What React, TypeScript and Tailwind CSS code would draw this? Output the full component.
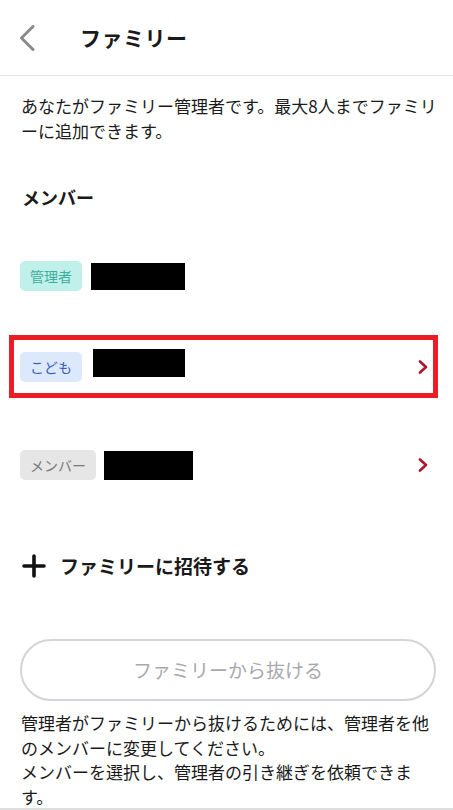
import type { ReactNode } from "react";

type Role = "admin" | "child" | "member";

interface Member {
  id: number;
  role: Role;
  nameWidth: string;
  nameOffset: string;
  selected?: boolean;
  editable?: boolean;
  spacing: string;
}

const badgeStyles: Record<Role, { label: string; className: string }> = {
  admin: { label: "管理者", className: "bg-[#bff0e9] text-[#3fae9f]" },
  child: { label: "こども", className: "bg-[#dce8fb] text-[#3d5fb3]" },
  member: { label: "メンバー", className: "bg-[#e6e6e6] text-[#7a7a7a]" },
};

const members: Member[] = [
  { id: 1, role: "admin", nameWidth: "w-[94px]", nameOffset: "ml-[9px] mt-[1px] h-[27px]", spacing: "mt-[34px]" },
  { id: 2, role: "child", nameWidth: "w-[92px]", nameOffset: "ml-[11px] -mt-[7px] h-[28px]", selected: true, editable: true, spacing: "mt-[28px]" },
  { id: 3, role: "member", nameWidth: "w-[89px]", nameOffset: "ml-[8px] mt-[2px] h-[29px]", editable: true, spacing: "mt-[35px]" },
];

function Chevron({ className }: { className?: string }) {
  return (
    <svg width="12" height="14" viewBox="0 0 12 14" fill="none" className={className}>
      <polyline points="3 1.5 9 7 3 12.5" stroke="currentColor" strokeWidth="2.6" strokeLinecap="round" strokeLinejoin="round" />
    </svg>
  );
}

function Badge({ role }: { role: Role }) {
  const b = badgeStyles[role];
  return (
    <span className={`inline-flex h-[30px] items-center rounded-[5px] px-[10px] text-[14px] leading-none ${b.className}`}>
      {b.label}
    </span>
  );
}

function MemberRow({ m }: { m: Member }) {
  return (
    <div
      className={`${m.spacing} ml-[9px] mr-[15px] flex h-[63px] items-center border-[5px] pl-[6px] pr-[4px] ${
        m.selected ? "border-[#ec1c24]" : "border-transparent"
      }`}
    >
      <Badge role={m.role} />
      <span className={`${m.nameWidth} ${m.nameOffset} bg-black`} />
      <div className="flex-1" />
      {m.editable && <Chevron className="text-[#b0162a]" />}
    </div>
  );
}

// lines are broken by hand so the wrap stays put
function Paragraph({ lines, className = "" }: { lines: ReactNode[]; className?: string }) {
  return (
    <p className={`whitespace-nowrap pl-[21px] text-[17px] text-[#1a1a1a] ${className}`}>
      {lines.map((l, i) => (
        <span key={i} className="block">
          {l}
        </span>
      ))}
    </p>
  );
}

export default function App() {
  return (
    <div
      className="relative min-h-[810px] bg-white pb-2"
      style={{ fontFamily: '"Noto Sans CJK JP", "Noto Sans", sans-serif' }}
    >
      <header className="flex h-[76px] items-center border-b border-[#e2e2e2]">
        <button className="ml-[18px] flex h-[30px] w-[20px] items-center" aria-label="戻る">
          <svg width="18" height="26" viewBox="0 0 18 26" fill="none">
            <polyline points="15 1.5 3.5 13 15 24.5" stroke="#8a8a8a" strokeWidth="3" strokeLinecap="round" strokeLinejoin="round" />
          </svg>
        </button>
        <h1 className="ml-[42px] text-[21px] font-bold tracking-[0.5px] text-[#1a1a1a]">ファミリー</h1>
      </header>

      <Paragraph
        className="mt-[17px] leading-[25px]"
        lines={["あなたがファミリー管理者です。最大8人までファミリ", "ーに追加できます。"]}
      />

      <h2 className="mt-[41px] pl-[22px] text-[18px] font-bold leading-[26px] text-[#1a1a1a]">メンバー</h2>

      {members.map((m) => (
        <MemberRow key={m.id} m={m} />
      ))}

      <button className="mt-[56px] flex items-center pl-[22px]">
        <svg width="24" height="24" viewBox="0 0 24 24" fill="none">
          <path d="M12 2v20M2 12h20" stroke="#111" strokeWidth="3.6" strokeLinecap="round" />
        </svg>
        <span className="ml-[14px] text-[19px] font-bold leading-[28px] text-[#1a1a1a]">ファミリーに招待する</span>
      </button>

      <div className="mt-[59px] px-[20px]">
        <button
          disabled
          className="flex h-[62px] w-[416px] items-center justify-center rounded-full border-2 border-[#d4d4d8] text-[19px] text-[#a9a9ad]"
        >
          ファミリーから抜ける
        </button>
      </div>

      <Paragraph
        className="mt-[10px] leading-[24.5px]"
        lines={[
          "管理者がファミリーから抜けるためには、管理者を他",
          "のメンバーに変更してください。",
          "メンバーを選択し、管理者の引き継ぎを依頼できま",
          "す。",
        ]}
      />

      <div className="fixed bottom-0 left-0 right-0 h-[2px] bg-[#dedede]" />
    </div>
  );
}
